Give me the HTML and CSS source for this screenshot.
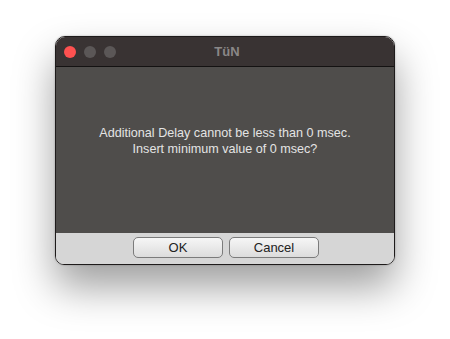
FILE: index.html
```html
<!DOCTYPE html>
<html>
<head>
<meta charset="utf-8">
<link rel="stylesheet" href="styles.css">
</head>
<body>
<div class="stage">
  <div class="window">
    <div class="titlebar">
      <div class="lights">
        <span class="light red"></span>
        <span class="light gray"></span>
        <span class="light gray"></span>
      </div>
      <div class="title">TüN</div>
    </div>
    <div class="content">
      <p class="msg">Additional Delay cannot be less than 0 msec.<br>Insert minimum value of 0 msec?</p>
    </div>
    <div class="buttons">
      <button class="btn">OK</button>
      <button class="btn">Cancel</button>
    </div>
  </div>
</div>
</body>
</html>
```
FILE: styles.css
```css
html, body {
  margin: 0;
  padding: 0;
  background: #ffffff;
  width: 450px;
  height: 339px;
  overflow: hidden;
}
.stage {
  padding: 36px 0 0 55px;
  font-family: "Liberation Sans", Arial, sans-serif;
}
.window {
  width: 338px;
  height: 227px;
  border: 1px solid #1e1b1b;
  border-radius: 10px 10px 9px 9px;
  overflow: hidden;
  display: flex;
  flex-direction: column;
  box-shadow: 0 22px 40px rgba(0,0,0,0.38), 0 0 2px rgba(0,0,0,0.3);
}
.titlebar {
  height: 29px;
  flex: none;
  background: #393333;
  border-bottom: 1px solid #141212;
  position: relative;
  display: flex;
  align-items: center;
  justify-content: center;
}
.lights {
  position: absolute;
  left: 8px;
  top: 9px;
  display: flex;
  gap: 8px;
}
.light {
  width: 12px;
  height: 12px;
  border-radius: 50%;
  display: block;
}
.red { background: #fe5150; }
.gray { background: #5b5757; }
.title {
  color: #8a8787;
  font-weight: bold;
  font-size: 13px;
  margin-left: 4px;
}
.content {
  flex: 1;
  background: #4f4d4b;
  display: flex;
  justify-content: center;
  padding-top: 58px;
}
.msg {
  margin: 0;
  color: #e4e4e4;
  font-size: 12.6px;
  line-height: 16px;
  text-align: center;
}
.buttons {
  height: 31px;
  flex: none;
  background: #d6d6d6;
  display: flex;
  justify-content: center;
  gap: 6px;
  padding-top: 4px;
  box-sizing: border-box;
  padding-left: 2px;
}
.btn {
  width: 90px;
  height: 21px;
  border: 1px solid #7b7b7b;
  border-radius: 5px;
  background: linear-gradient(#f6f6f6, #dcdcdc);
  font-family: "Liberation Sans", Arial, sans-serif;
  font-size: 13px;
  color: #222;
  padding: 0;
}
```
